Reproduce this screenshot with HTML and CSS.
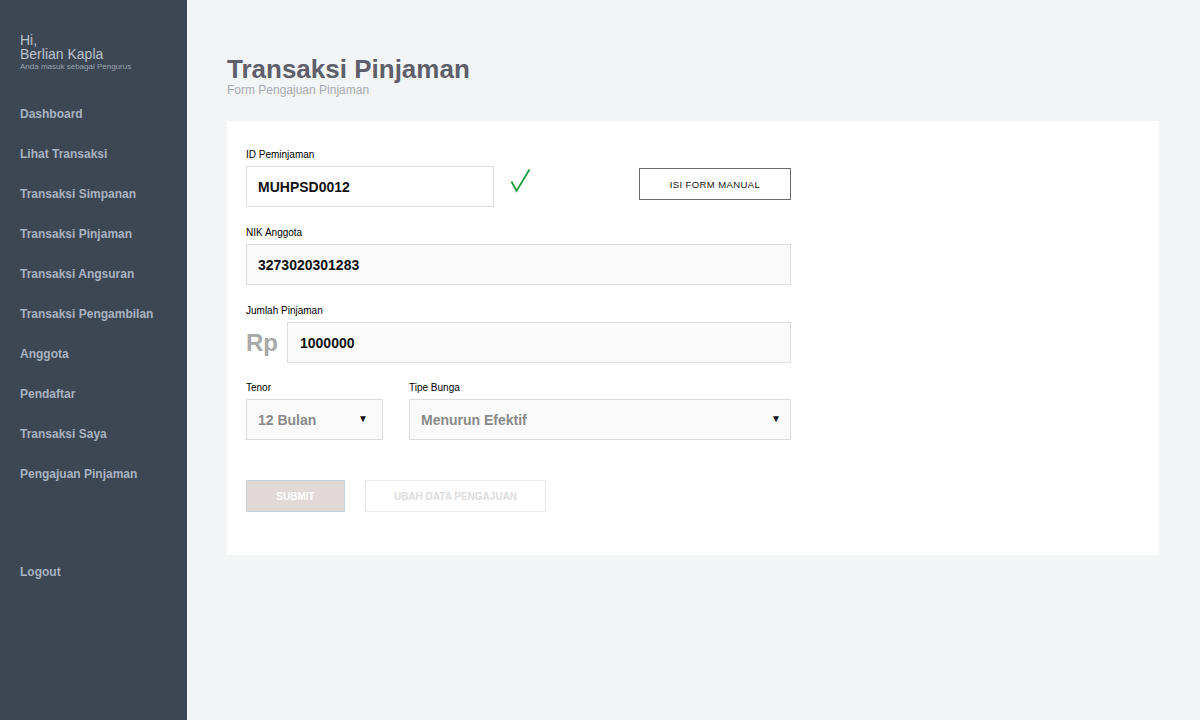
FILE: index.html
```html
<!DOCTYPE html>
<html>
<head>
<meta charset="utf-8">
<link rel="stylesheet" href="styles.css">
</head>
<body>
<div class="app">
  <aside class="sidebar">
    <div class="user">
      <div class="hi">Hi,</div>
      <div class="name">Berlian Kapla</div>
      <div class="role">Anda masuk sebagai Pengurus</div>
    </div>
    <nav class="nav">
      <a class="nav-item">Dashboard</a>
      <a class="nav-item">Lihat Transaksi</a>
      <a class="nav-item">Transaksi Simpanan</a>
      <a class="nav-item">Transaksi Pinjaman</a>
      <a class="nav-item">Transaksi Angsuran</a>
      <a class="nav-item">Transaksi Pengambilan</a>
      <a class="nav-item">Anggota</a>
      <a class="nav-item">Pendaftar</a>
      <a class="nav-item">Transaksi Saya</a>
      <a class="nav-item">Pengajuan Pinjaman</a>
    </nav>
    <a class="nav-item logout">Logout</a>
  </aside>
  <main class="main">
    <h1 class="title">Transaksi Pinjaman</h1>
    <div class="subtitle">Form Pengajuan Pinjaman</div>
    <section class="card">
      <div class="group">
        <label class="label">ID Peminjaman</label>
        <div class="row">
          <div class="input input-id white">MUHPSD0012</div>
          <svg class="check" width="24" height="26" viewBox="0 0 24 26"><path d="M2.5 14.5 L7.5 24 L20.5 2.5" fill="none" stroke="#1f9c3c" stroke-width="1.8" stroke-linejoin="miter"/></svg>
          <button class="btn-manual">ISI FORM MANUAL</button>
        </div>
      </div>
      <div class="group">
        <label class="label">NIK Anggota</label>
        <div class="input input-wide">3273020301283</div>
      </div>
      <div class="group">
        <label class="label">Jumlah Pinjaman</label>
        <div class="row">
          <span class="rp">Rp</span>
          <div class="input input-amount">1000000</div>
        </div>
      </div>
      <div class="row selects">
        <div class="group">
          <label class="label">Tenor</label>
          <div class="input select select-tenor"><span>12 Bulan</span><span class="arrow">▼</span></div>
        </div>
        <div class="group">
          <label class="label">Tipe Bunga</label>
          <div class="input select select-bunga"><span>Menurun Efektif</span><span class="arrow">▼</span></div>
        </div>
      </div>
      <div class="actions">
        <button class="btn-submit">SUBMIT</button>
        <button class="btn-ubah">UBAH DATA PENGAJUAN</button>
      </div>
    </section>
  </main>
</div>
</body>
</html>
```

FILE: styles.css
```css
* { box-sizing: border-box; }
html, body { margin: 0; padding: 0; }
body {
  font-family: "Liberation Sans", Arial, sans-serif;
  background: #f3f4f6;
  width: 1200px;
  height: 720px;
  overflow: hidden;
}
.app { display: flex; height: 720px; }
.sidebar {
  width: 187px;
  flex: none;
  background: #3d4653;
  padding: 33px 0 0 20px;
  display: flex;
  flex-direction: column;
}
.user { color: #bcc3cc; }
.hi, .name { font-size: 14px; line-height: 14px; }
.role { font-size: 8px; line-height: 10px; color: #9aa3ae; margin-top: 1px; }
.nav { display: flex; flex-direction: column; margin-top: 22px; }
.nav-item {
  display: block;
  font-size: 12px;
  font-weight: bold;
  line-height: 40px;
  height: 40px;
  color: #a9b3c1;
}
.logout { margin-top: 58px; }

.main { flex: 1; padding: 0 41px 0 40px; }
.title {
  margin: 54px 0 0;
  font-size: 26px;
  line-height: 30px;
  font-weight: bold;
  color: #5e5f6a;
}
.subtitle {
  font-size: 12px;
  line-height: 14px;
  color: #a7aab2;
  margin-top: -1px;
}
.card {
  background: #fff;
  margin-top: 24px;
  height: 434px;
  padding: 28px 19px 0;
}
.group { display: flex; flex-direction: column; margin-bottom: 20px; }
.label {
  font-size: 10px;
  line-height: 12px;
  color: #000;
  margin-bottom: 5px;
}
.row { display: flex; align-items: center; }
.input {
  height: 41px;
  border: 1px solid #dcdcdc;
  background: #fafafa;
  font-size: 14px;
  font-weight: bold;
  color: #111;
  padding-left: 11px;
  display: flex;
  align-items: center;
}
.white { background: #fff; }
.input-id { width: 248px; }
.check { margin-left: 15px; margin-top: -14px; }
.btn-manual {
  margin-left: 106px;
  margin-top: -5px;
  width: 152px;
  height: 32px;
  border: 1px solid #6a6a6a;
  background: #fff;
  font-family: "Liberation Sans", Arial, sans-serif;
  font-size: 9.5px;
  letter-spacing: 0.4px;
  color: #111;
  padding: 0;
}
.input-wide { width: 545px; }
.rp {
  width: 41px;
  font-size: 24px;
  font-weight: bold;
  color: #a8a8a8;
  line-height: 41px;
}
.input-amount { width: 504px; padding-left: 12px; }
.selects { align-items: flex-start; gap: 26px; margin-top: -1px; }
.select {
  color: #8a8a8a;
  justify-content: space-between;
  padding-right: 14px;
}
.select-tenor { width: 137px; }
.select-bunga { width: 382px; padding-right: 9px; }
.arrow { font-size: 10px; color: #111; margin-top: -3px; }
.actions { display: flex; gap: 20px; margin-top: 20px; }
.btn-submit, .btn-ubah {
  height: 32px;
  font-family: "Liberation Sans", Arial, sans-serif;
  font-size: 10px;
  font-weight: bold;
  padding: 0;
}
.btn-submit {
  width: 99px;
  background: #e1d9d8;
  border: 1px solid #c6d2df;
  color: #fff;
}
.btn-ubah {
  width: 181px;
  background: #fff;
  border: 1px solid #e9e9e9;
  color: #dcdcdc;
}
```
